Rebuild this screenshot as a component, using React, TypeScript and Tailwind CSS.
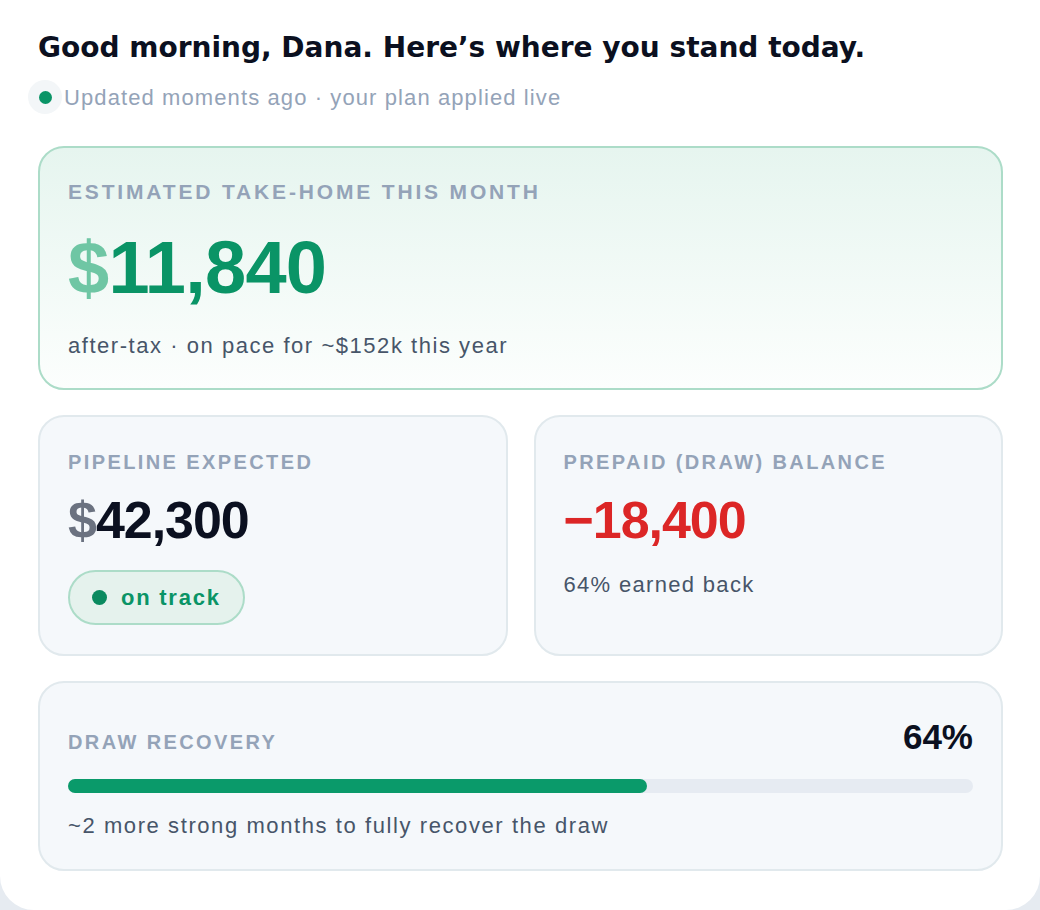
import React from 'react';

const sans = "font-['Liberation_Sans',Arial,sans-serif]";

function Label({ children, small }: { children: React.ReactNode; small?: boolean }) {
  return (
    <div
      className={`${sans} ${small ? 'text-[20px] tracking-[0.12em]' : 'text-[21px] tracking-[0.135em]'} font-bold uppercase leading-none text-[#94a3b8]`}
    >
      {children}
    </div>
  );
}

export default function App() {
  return (
    <div className="min-h-[910px] bg-[#e6ebf1]">
      <div className="h-[910px] w-[1040px] overflow-hidden rounded-b-[34px] bg-white pl-[38px] pr-[37px] pt-[30px]">
        <h1 className="font-['DejaVu_Sans',sans-serif] text-[28px] font-bold leading-[36px] text-[#0b1020]">
          Good morning, Dana. Here’s where you stand today.
        </h1>

        <div className="mt-[14px] flex items-center">
          <span className="-ml-[10px] flex h-[34px] w-[34px] items-center justify-center rounded-full bg-[#f3f6f8]">
            <span className="h-[13px] w-[13px] rounded-full bg-[#0a9466]" />
          </span>
          <span className={`${sans} ml-[2px] text-[22px] tracking-[0.05em] text-[#94a3b8]`}>
            Updated moments ago · your plan applied live
          </span>
        </div>

        <section className="mt-[32px] h-[244px] rounded-[26px] border-2 border-[#acdcc8] bg-gradient-to-b from-[#e6f5ef] to-[#fcfefd] px-[28px] pt-[33px]">
          <Label>Estimated take-home this month</Label>
          <div className={`${sans} mt-[29px] text-[74px] font-bold leading-[74px] tracking-[-0.01em]`}>
            <span className="text-[#6fc6a4]">$</span>
            <span className="text-[#0a9466]">11,840</span>
          </div>
          <p className={`${sans} mt-[24px] text-[22px] tracking-[0.07em] text-[#475569]`}>
            after-tax · on pace for ~$152k this year
          </p>
        </section>

        <div className="mt-[25px] grid grid-cols-2 gap-[26px]">
          <section className="h-[241px] rounded-[26px] border-2 border-[#e1e9ed] bg-[#f5f8fb] px-[28px] pt-[35px]">
            <Label small>Pipeline expected</Label>
            <div className={`${sans} mt-[22px] text-[52px] font-bold leading-[52px] tracking-[-0.02em]`}>
              <span className="text-[#6b7280]">$</span>
              <span className="text-[#0b1020]">42,300</span>
            </div>
            <div className="mt-[24px] inline-flex h-[55px] items-center gap-[14px] rounded-full border-2 border-[#acdcc8] bg-[#e5f2ed] pl-[22px] pr-[22px]">
              <span className="h-[15px] w-[15px] rounded-full bg-[#0a8a5f]" />
              <span className={`${sans} text-[22px] font-bold tracking-[0.08em] text-[#0a9466]`}>on track</span>
            </div>
          </section>

          <section className="h-[241px] rounded-[26px] border-2 border-[#e1e9ed] bg-[#f5f8fb] px-[28px] pt-[35px]">
            <Label small>Prepaid (draw) balance</Label>
            <div className={`${sans} mt-[22px] text-[52px] font-bold leading-[52px] tracking-[-0.02em] text-[#dc2626]`}>
              −18,400
            </div>
            <p className={`${sans} mt-[22px] text-[22px] tracking-[0.06em] text-[#475569]`}>64% earned back</p>
          </section>
        </div>

        <section className="mt-[25px] h-[190px] rounded-[26px] border-2 border-[#e1e9ed] bg-[#f5f8fb] px-[28px] pt-[36px]">
          <div className="flex items-end justify-between">
            <Label small>Draw recovery</Label>
            <span className={`${sans} -mb-[2px] text-[35px] font-bold leading-none text-[#0b1020]`}>64%</span>
          </div>
          <div className="mt-[27px] h-[14px] w-full rounded-full bg-[#e6ebf2]">
            <div className="h-full rounded-full bg-[#0a9a6a]" style={{ width: '64%' }} />
          </div>
          <p className={`${sans} mt-[16px] text-[22px] tracking-[0.072em] text-[#475569]`}>
            ~2 more strong months to fully recover the draw
          </p>
        </section>
      </div>
    </div>
  );
}
